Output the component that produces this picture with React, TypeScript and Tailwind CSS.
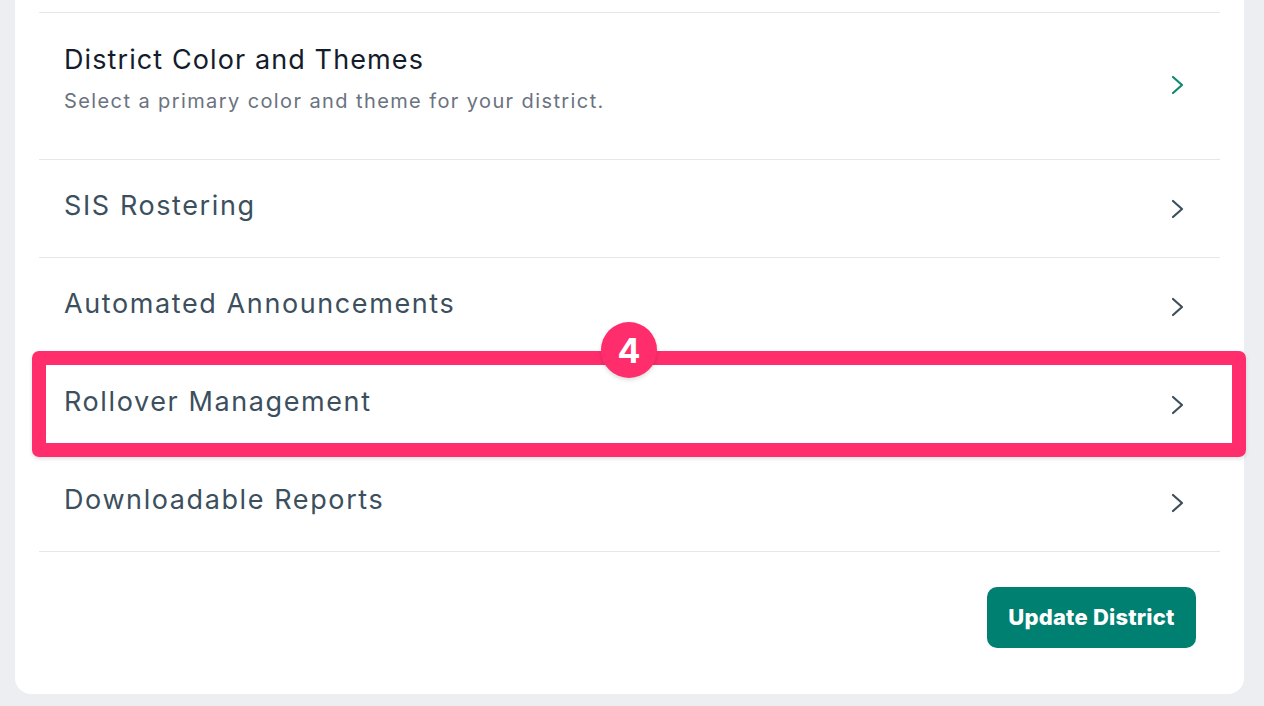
import React from 'react';

const Chevron = ({ className }: { className: string }) => (
  <svg
    width="16"
    height="24"
    viewBox="0 0 16 24"
    fill="none"
    stroke="currentColor"
    strokeWidth="2.2"
    strokeLinecap="round"
    strokeLinejoin="round"
    className={className}
  >
    <path d="M3 4 L12 12 L3 20" />
  </svg>
);

const rows = [
  'SIS Rostering',
  'Automated Announcements',
  'Rollover Management',
  'Downloadable Reports',
];

const App: React.FC = () => {
  return (
    <div
      className="w-[1264px] h-[706px] overflow-hidden bg-[#eceef2] pl-[15px] pr-[20px]"
      style={{ fontFamily: 'Inter, "Noto Sans", sans-serif' }}
    >
      <div className="bg-white rounded-b-2xl pt-3 px-6 pb-[46px]">
        {/* first row with description */}
        <div className="border-t border-[#e5e7eb] h-[147px] flex items-center justify-between pl-[25px] pr-[34px]">
          <div className="flex flex-col pb-[14px]">
            <h2 className="text-[27px] leading-[34px] text-[#141c2c] tracking-[1.1px]">
              District Color and Themes
            </h2>
            <p className="text-[20px] leading-[28px] mt-[10px] text-[#6b7280] tracking-[1.4px]">
              Select a primary color and theme for your district.
            </p>
          </div>
          <Chevron className="text-[#0b8a72] -mt-[2px]" />
        </div>

        {rows.map((label) => (
          <div
            key={label}
            className="relative border-t border-[#e5e7eb] h-[98px] flex items-center justify-between pl-[25px] pr-[34px]"
          >
            <span className="text-[27px] leading-[34px] text-[#3c4f5e] tracking-[1.6px] -mt-[6px]">
              {label}
            </span>
            <Chevron className="text-[#3c4f5e]" />

            {label === 'Rollover Management' && (
              <>
                <div className="absolute z-10 left-[-7px] right-[-26px] top-[-5px] bottom-[-4px] border-[14px] border-[#ff2d6b] rounded-[7px] shadow-[0_2px_4px_rgba(0,0,0,0.12)] pointer-events-none" />
                <div className="absolute z-20 left-[562px] top-[-34px] w-[56px] h-[56px] rounded-full bg-[#ff2d6b] flex items-center justify-center text-white text-[34px] font-bold shadow-[0_2px_4px_rgba(0,0,0,0.15)]">
                  4
                </div>
              </>
            )}
          </div>
        ))}

        <div className="border-t border-[#e5e7eb] pt-[35px] flex justify-end pr-6">
          <button className="w-[209px] h-[61px] rounded-[10px] bg-[#008070] text-white text-[22px] font-extrabold tracking-[0.2px]">
            Update District
          </button>
        </div>
      </div>
    </div>
  );
};

export default App;
